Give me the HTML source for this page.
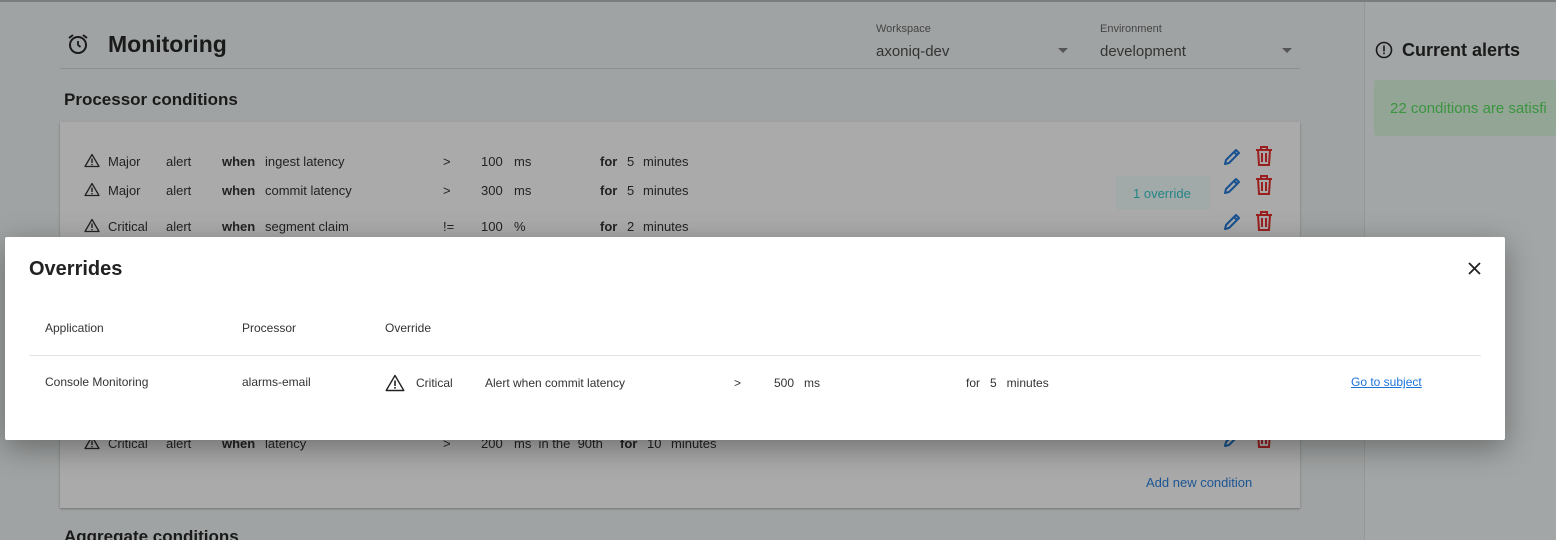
<!DOCTYPE html>
<html><head><meta charset="utf-8"><style>
*{box-sizing:border-box;margin:0;padding:0}
html,body{width:1556px;height:540px;overflow:hidden}
body{position:relative;background:#a0a3a3;font-family:"Liberation Sans",sans-serif;color:#1e1e1e}
.a{position:absolute;white-space:nowrap}
.t{font-size:13px;color:#222}
.b{font-weight:bold}
</style></head><body>
<div class="a" style="left:0;top:0;width:1556px;height:2px;background:#7a7d7d"></div>
<div class="a" style="left:1364px;top:2px;width:192px;height:538px;background:#a3a6a6;border-left:1px solid #959898"></div>
<svg class="a" style="left:1375px;top:41px" width="18" height="18" viewBox="0 0 18 18"><circle cx="9" cy="9" r="7.5" fill="none" stroke="#1a1a1a" stroke-width="1.6"/><rect x="8.2" y="4.5" width="1.6" height="6" fill="#1a1a1a"/><rect x="8.2" y="11.6" width="1.6" height="1.6" fill="#1a1a1a"/></svg>
<div class="a b" style="left:1402px;top:40px;font-size:18px;color:#1a1a1a">Current alerts</div>
<div class="a" style="left:1374px;top:80px;width:182px;height:56px;background:#93a695;border-radius:3px"></div>
<div class="a" style="left:1390px;top:100px;font-size:15px;color:#3a9440">22 conditions are satisfi</div>
<svg class="a" style="left:66px;top:32px" width="24" height="24" viewBox="0 0 24 24"><circle cx="12" cy="13" r="8" fill="none" stroke="#1a1a1a" stroke-width="2"/><path d="M12 9v4l2.5 2" stroke="#1a1a1a" stroke-width="1.8" fill="none"/><path d="M3 6l4-3M21 6l-4-3" stroke="#1a1a1a" stroke-width="2"/></svg>
<div class="a b" style="left:108px;top:31px;font-size:23px;color:#1a1a1a">Monitoring</div>
<div class="a" style="left:876px;top:23px;font-size:11px;color:#444">Workspace</div>
<div class="a" style="left:876px;top:43px;font-size:15px;color:#333">axoniq-dev</div>
<div class="a" style="left:1058px;top:48px;border:5px solid transparent;border-top:5px solid #555"></div>
<div class="a" style="left:1100px;top:23px;font-size:11px;color:#444">Environment</div>
<div class="a" style="left:1100px;top:43px;font-size:15px;color:#333">development</div>
<div class="a" style="left:1282px;top:48px;border:5px solid transparent;border-top:5px solid #555"></div>
<div class="a" style="left:60px;top:68px;width:1240px;height:1px;background:#8c8f8f"></div>
<div class="a b" style="left:64px;top:90px;font-size:17px;color:#1a1a1a">Processor conditions</div>
<div class="a" style="left:60px;top:122px;width:1240px;height:386px;background:#aaaaaa;box-shadow:0 1px 2px rgba(0,0,0,.3)"></div>
<div class="a" style="left:1116px;top:176px;width:94px;height:34px;background:#a2a9a9;border-radius:2px"></div>
<div class="a" style="left:1133px;top:186px;font-size:13px;color:#248585">1 override</div>
<div id="rows"></div>
<div class="a" style="left:1146px;top:475px;font-size:13px;color:#1c5594">Add new condition</div>
<div class="a b" style="left:64px;top:527px;font-size:17px;color:#1a1a1a">Aggregate conditions</div>
<script>
var rows=[[161,"Major","ingest latency",">","100","ms","for","5","minutes"],[190,"Major","commit latency",">","300","ms","for","5","minutes"],[226,"Critical","segment claim","!=","100","%","for","2","minutes"],[443,"Critical","latency",">","200","ms  in the  90th","for","10","minutes"]];
var h="";
rows.forEach(function(r){var y=r[0]-7;
h+='<svg class="a" style="left:84px;top:'+(y-1)+'px" width="16" height="15" viewBox="0 0 16 15"><path d="M8 1.5L1 13.5h14z" fill="none" stroke="#222" stroke-width="1.3" stroke-linejoin="round"/><rect x="7.3" y="5.5" width="1.4" height="4.5" fill="#222"/><rect x="7.3" y="11" width="1.4" height="1.3" fill="#222"/></svg>';
h+='<div class="a t" style="left:108px;top:'+y+'px">'+r[1]+'</div><div class="a t" style="left:166px;top:'+y+'px">alert</div><div class="a t b" style="left:222px;top:'+y+'px">when</div><div class="a t" style="left:265px;top:'+y+'px">'+r[2]+'</div><div class="a t" style="left:443px;top:'+y+'px">'+r[3]+'</div><div class="a t" style="left:481px;top:'+y+'px">'+r[4]+'</div><div class="a t" style="left:514px;top:'+y+'px;white-space:pre">'+r[5]+'</div>';
var fx=r[5].length>3?620:600;
h+='<div class="a t b" style="left:'+fx+'px;top:'+y+'px">'+r[6]+'</div><div class="a t" style="left:'+(fx+27)+'px;top:'+y+'px">'+r[7]+'</div><div class="a t" style="left:'+(fx+43+(r[7].length-1)*8)+'px;top:'+y+'px">'+r[8]+'</div>';
h+='<svg class="a" style="left:1221px;top:'+(y-8)+'px" width="22" height="22" viewBox="0 0 22 22"><path d="M4 18l1-4L15 4l3 3L8 17z M13 6l3 3" fill="none" stroke="#17508f" stroke-width="2" stroke-linejoin="round"/></svg>';
h+='<svg class="a" style="left:1254px;top:'+(y-9)+'px" width="20" height="22" viewBox="0 0 20 22"><path d="M2 5h16M7 5V2h6v3M4 5l1 15h10l1-15M8 8v9M12 8v9" fill="none" stroke="#9a1f1f" stroke-width="2"/></svg>';});
document.getElementById('rows').innerHTML=h;
</script>
<div class="a" style="left:5px;top:237px;width:1500px;height:203px;background:#fff;border-radius:2px;box-shadow:0 8px 30px rgba(0,0,0,.35)"></div>
<div class="a b" style="left:29px;top:258px;font-size:20px;color:#222">Overrides</div>
<svg class="a" style="left:1468px;top:262px" width="13" height="13" viewBox="0 0 13 13"><path d="M1 1l11 11M12 1L1 12" stroke="#222" stroke-width="1.8"/></svg>
<div class="a" style="left:45px;top:321px;font-size:12px;color:#333">Application</div>
<div class="a" style="left:242px;top:321px;font-size:12px;color:#333">Processor</div>
<div class="a" style="left:385px;top:321px;font-size:12px;color:#333">Override</div>
<div class="a" style="left:29px;top:355px;width:1452px;height:1px;background:#e3e3e3"></div>
<div class="a" style="left:45px;top:375px;font-size:12px;color:#333">Console Monitoring</div>
<div class="a" style="left:242px;top:375px;font-size:12px;color:#333">alarms-email</div>
<svg class="a" style="left:385px;top:374px" width="20" height="18" viewBox="0 0 20 18"><path d="M10 1.5L1.2 16.5h17.6z" fill="none" stroke="#222" stroke-width="1.4" stroke-linejoin="round"/><rect x="9.2" y="6.5" width="1.6" height="5.5" fill="#222"/><rect x="9.2" y="13" width="1.6" height="1.6" fill="#222"/></svg>
<div class="a" style="left:416px;top:376px;font-size:12px;color:#333">Critical</div>
<div class="a" style="left:485px;top:376px;font-size:12px;color:#333">Alert when commit latency</div>
<div class="a" style="left:734px;top:376px;font-size:12px;color:#333">&gt;</div>
<div class="a" style="left:774px;top:376px;font-size:12px;color:#333">500&nbsp;&nbsp; ms</div>
<div class="a" style="left:966px;top:376px;font-size:12px;color:#333">for&nbsp;&nbsp; 5&nbsp;&nbsp; minutes</div>
<div class="a" style="left:1351px;top:375px;font-size:12px;color:#1a73d9;text-decoration:underline">Go to subject</div>
</body></html>
